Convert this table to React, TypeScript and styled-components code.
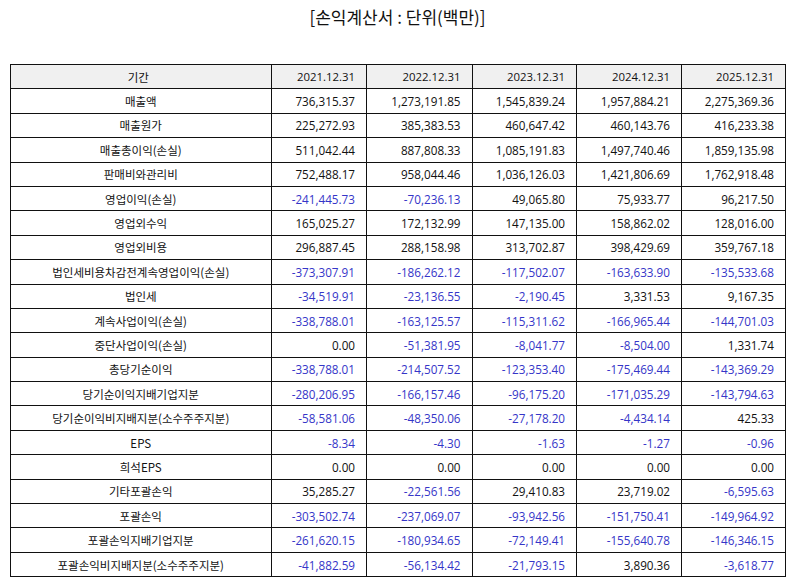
import styled, { createGlobalStyle } from "styled-components";

const GlobalStyle = createGlobalStyle`
  html, body {
    margin: 0;
    padding: 0;
    background: #ffffff;
  }
  body {
    font-family: "Noto Sans CJK KR", "Noto Sans", sans-serif;
    color: #111111;
  }
`;

const Page = styled.div`
  width: 795px;
  height: 586px;
  padding: 0 10px;
  box-sizing: border-box;
`;

const Title = styled.h1`
  margin: 0;
  height: 64px;
  padding-top: 5px;
  box-sizing: border-box;
  text-align: center;
  font-size: 17px;
  font-weight: 400;
  line-height: 24px;
  color: #111111;
`;

const Table = styled.table`
  width: 775px;
  border-collapse: collapse;
  table-layout: fixed;
  font-size: 11.5px;
`;

const HeadCell = styled.th<{ $label?: boolean }>`
  height: 24.4px;
  padding: 0 11px 0 6px;
  border: 1px solid #111111;
  background: #f0f0f0;
  font-weight: 400;
  font-family: ${(p) => (p.$label ? `"Noto Sans CJK KR", sans-serif` : `"Open Sans", "Noto Sans CJK KR", sans-serif`)};
  font-size: ${(p) => (p.$label ? "11.5px" : "11.4px")};
  text-align: ${(p) => (p.$label ? "center" : "right")};
  box-sizing: border-box;
`;

const LabelCell = styled.td`
  height: 24.4px;
  padding: 0 6px;
  border: 1px solid #111111;
  text-align: center;
  box-sizing: border-box;
`;

const NumCell = styled.td<{ $neg: boolean }>`
  height: 24.4px;
  padding: 0 11px 0 5px;
  border: 1px solid #111111;
  text-align: right;
  font-family: "Open Sans", "Noto Sans CJK KR", sans-serif;
  font-size: 11.7px;
  color: ${(p) => (p.$neg ? "#3535c8" : "#111111")};
  box-sizing: border-box;
`;

const years = ["2021.12.31", "2022.12.31", "2023.12.31", "2024.12.31", "2025.12.31"];
const widths = [260.5, 95.5, 105.5, 104.5, 105, 104];

const rows: [string, string[]][] = [
  ["매출액", ["736,315.37", "1,273,191.85", "1,545,839.24", "1,957,884.21", "2,275,369.36"]],
  ["매출원가", ["225,272.93", "385,383.53", "460,647.42", "460,143.76", "416,233.38"]],
  ["매출총이익(손실)", ["511,042.44", "887,808.33", "1,085,191.83", "1,497,740.46", "1,859,135.98"]],
  ["판매비와관리비", ["752,488.17", "958,044.46", "1,036,126.03", "1,421,806.69", "1,762,918.48"]],
  ["영업이익(손실)", ["-241,445.73", "-70,236.13", "49,065.80", "75,933.77", "96,217.50"]],
  ["영업외수익", ["165,025.27", "172,132.99", "147,135.00", "158,862.02", "128,016.00"]],
  ["영업외비용", ["296,887.45", "288,158.98", "313,702.87", "398,429.69", "359,767.18"]],
  ["법인세비용차감전계속영업이익(손실)", ["-373,307.91", "-186,262.12", "-117,502.07", "-163,633.90", "-135,533.68"]],
  ["법인세", ["-34,519.91", "-23,136.55", "-2,190.45", "3,331.53", "9,167.35"]],
  ["계속사업이익(손실)", ["-338,788.01", "-163,125.57", "-115,311.62", "-166,965.44", "-144,701.03"]],
  ["중단사업이익(손실)", ["0.00", "-51,381.95", "-8,041.77", "-8,504.00", "1,331.74"]],
  ["총당기순이익", ["-338,788.01", "-214,507.52", "-123,353.40", "-175,469.44", "-143,369.29"]],
  ["당기순이익지배기업지분", ["-280,206.95", "-166,157.46", "-96,175.20", "-171,035.29", "-143,794.63"]],
  ["당기순이익비지배지분(소수주주지분)", ["-58,581.06", "-48,350.06", "-27,178.20", "-4,434.14", "425.33"]],
  ["EPS", ["-8.34", "-4.30", "-1.63", "-1.27", "-0.96"]],
  ["희석EPS", ["0.00", "0.00", "0.00", "0.00", "0.00"]],
  ["기타포괄손익", ["35,285.27", "-22,561.56", "29,410.83", "23,719.02", "-6,595.63"]],
  ["포괄손익", ["-303,502.74", "-237,069.07", "-93,942.56", "-151,750.41", "-149,964.92"]],
  ["포괄손익지배기업지분", ["-261,620.15", "-180,934.65", "-72,149.41", "-155,640.78", "-146,346.15"]],
  ["포괄손익비지배지분(소수주주지분)", ["-41,882.59", "-56,134.42", "-21,793.15", "3,890.36", "-3,618.77"]],
];

export default function App() {
  return (
    <Page>
      <GlobalStyle />
      <Title>[손익계산서 : 단위(백만)]</Title>
      <Table>
        <colgroup>
          {widths.map((w, i) => (
            <col key={i} style={{ width: w }} />
          ))}
        </colgroup>
        <thead>
          <tr>
            <HeadCell $label>기간</HeadCell>
            {years.map((y) => (
              <HeadCell key={y}>{y}</HeadCell>
            ))}
          </tr>
        </thead>
        <tbody>
          {rows.map(([label, values]) => (
            <tr key={label}>
              <LabelCell>{label}</LabelCell>
              {values.map((v, i) => (
                <NumCell key={i} $neg={v.startsWith("-")}>
                  {v}
                </NumCell>
              ))}
            </tr>
          ))}
        </tbody>
      </Table>
    </Page>
  );
}
